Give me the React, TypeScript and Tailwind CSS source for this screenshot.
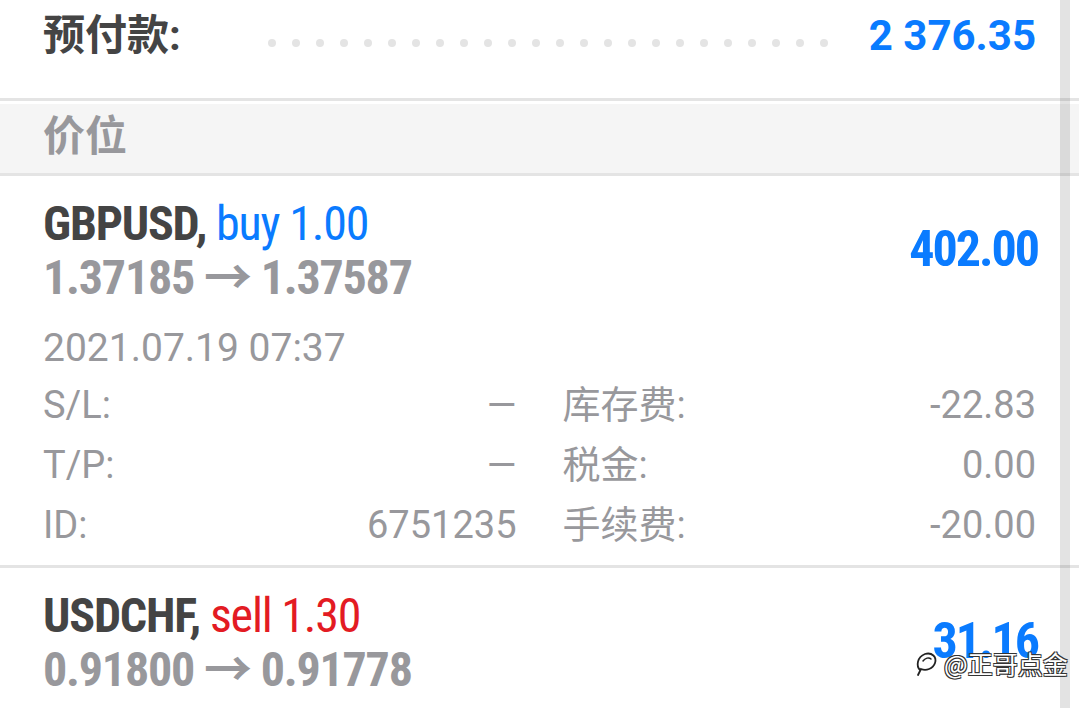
import React from 'react';

const cond = "font-['Roboto_Condensed','Roboto','Noto_Sans_CJK_SC',sans-serif] font-stretch-condensed";
const base = "font-['Roboto','Noto_Sans_CJK_SC',sans-serif]";

type Trade = {
  symbol: string;
  side: 'buy' | 'sell';
  volume: string;
  open: string;
  current: string;
  profit: string;
  time: string;
  sl: string;
  tp: string;
  id: string;
  swap: string;
  tax: string;
  fee: string;
};

const trades: Trade[] = [
  { symbol: 'GBPUSD', side: 'buy', volume: '1.00', open: '1.37185', current: '1.37587', profit: '402.00', time: '2021.07.19 07:37', sl: '—', tp: '—', id: '6751235', swap: '-22.83', tax: '0.00', fee: '-20.00' },
  { symbol: 'USDCHF', side: 'sell', volume: '1.30', open: '0.91800', current: '0.91778', profit: '31.16', time: '2021.07.19 07:41', sl: '—', tp: '—', id: '6751240', swap: '-3.12', tax: '0.00', fee: '-26.00' },
];

function Detail({ label, value }: { label: string; value: string }) {
  return (
    <div className="flex-1 flex items-center justify-between h-[60px]">
      <span className={`${base} text-[38px] leading-[60px] text-[#98989c]`}>{label}</span>
      <span className={`${base} text-[38px] leading-[60px] text-[#98989c]`}>{value}</span>
    </div>
  );
}

function TradeRow({ t }: { t: Trade }) {
  return (
    <div className="border-b-[3px] border-[#e4e4e4] pl-[43px] pr-[43px] pt-[21px] pb-[10px]">
      <div className="flex items-center justify-between">
        <div>
          <div className={`${cond} text-[48px] leading-[54px] font-bold tracking-[-1.2px] text-[#444444] whitespace-nowrap`}>
            {t.symbol},{' '}
            <span className={`font-normal ${t.side === 'buy' ? 'text-[#0a7bff]' : 'text-[#e31b23]'}`}>
              {t.side} {t.volume}
            </span>
          </div>
          <div className={`${cond} text-[48px] leading-[54px] font-bold tracking-[-1.2px] text-[#98989c] whitespace-nowrap`}>
            {t.open} → {t.current}
          </div>
        </div>
        <div className={`${cond} text-[50px] leading-[54px] font-bold tracking-[-2px] mr-[-2px] text-[#0a7bff] mb-[4px]`}>{t.profit}</div>
      </div>
      <div className={`${base} mt-[19px] text-[39px] leading-[48px] text-[#98989c]`}>{t.time}</div>
      <div className="mt-[3px] flex gap-[46px]">
        <div className="flex-1 flex flex-col">
          <Detail label="S/L:" value={t.sl} />
          <Detail label="T/P:" value={t.tp} />
          <Detail label="ID:" value={t.id} />
        </div>
        <div className="flex-1 flex flex-col">
          <Detail label="库存费:" value={t.swap} />
          <Detail label="税金:" value={t.tax} />
          <Detail label="手续费:" value={t.fee} />
        </div>
      </div>
    </div>
  );
}

export default function App() {
  return (
    <div className="relative w-[1079px] h-[708px] overflow-hidden bg-white">
      {/* margin row */}
      <div className="h-[98px] flex items-start pl-[43px] pr-[43px] pt-[12px]">
        <div className="w-[225px] font-['Roboto','Noto_Sans_CJK_SC',sans-serif] text-[42px] leading-[48px] font-bold text-[#444444]">
          预付款:
        </div>
        <div className="flex gap-[16px] mt-[27px]">
          {Array.from({ length: 24 }).map((_, i) => (
            <div key={i} className="w-[8px] h-[8px] rounded-full bg-[#e4e4e4]" />
          ))}
        </div>
        <div className="flex-1" />
        <div className={`${base} text-[42px] leading-[48px] font-bold text-[#0a7bff]`}>2 376.35</div>
      </div>

      {/* section header */}
      <div className="border-y-[3px] border-[#e4e4e4] pt-[3px]">
        <div className="h-[69px] bg-[#f5f5f5] pl-[43px] pt-[6px]">
          <span className="font-['Noto_Sans_CJK_SC',sans-serif] text-[42px] leading-[46px] font-bold text-[#98989c]">价位</span>
        </div>
      </div>

      {trades.map(t => <TradeRow key={t.id} t={t} />)}

      {/* scrollbar */}
      <div className="absolute top-0 bottom-0 right-[9px] w-[10px] bg-black/[0.11]" />

      {/* watermark */}
      <div className="absolute left-[914px] top-[648px] flex items-center gap-[4px]">
        <svg width="26" height="30" viewBox="0 0 26 30" fill="none">
          <path d="M6 22 C2 18 3 9 11 6 C18 4 23 9 21 15 C19 21 12 23 7 21 L4 27" stroke="#222" strokeWidth="1.8" strokeLinecap="round" fill="none" />
          <path d="M9 13 C11 10 15 9 17 11" stroke="#222" strokeWidth="1.5" strokeLinecap="round" fill="none" />
        </svg>
        <span className="font-['Noto_Sans_CJK_SC',sans-serif] text-[25px] leading-[30px] text-white [text-shadow:1px_1px_0_#333,-1px_-1px_0_#333,1px_-1px_0_#333,-1px_1px_0_#333]">
          @正哥点金
        </span>
      </div>
    </div>
  );
}
